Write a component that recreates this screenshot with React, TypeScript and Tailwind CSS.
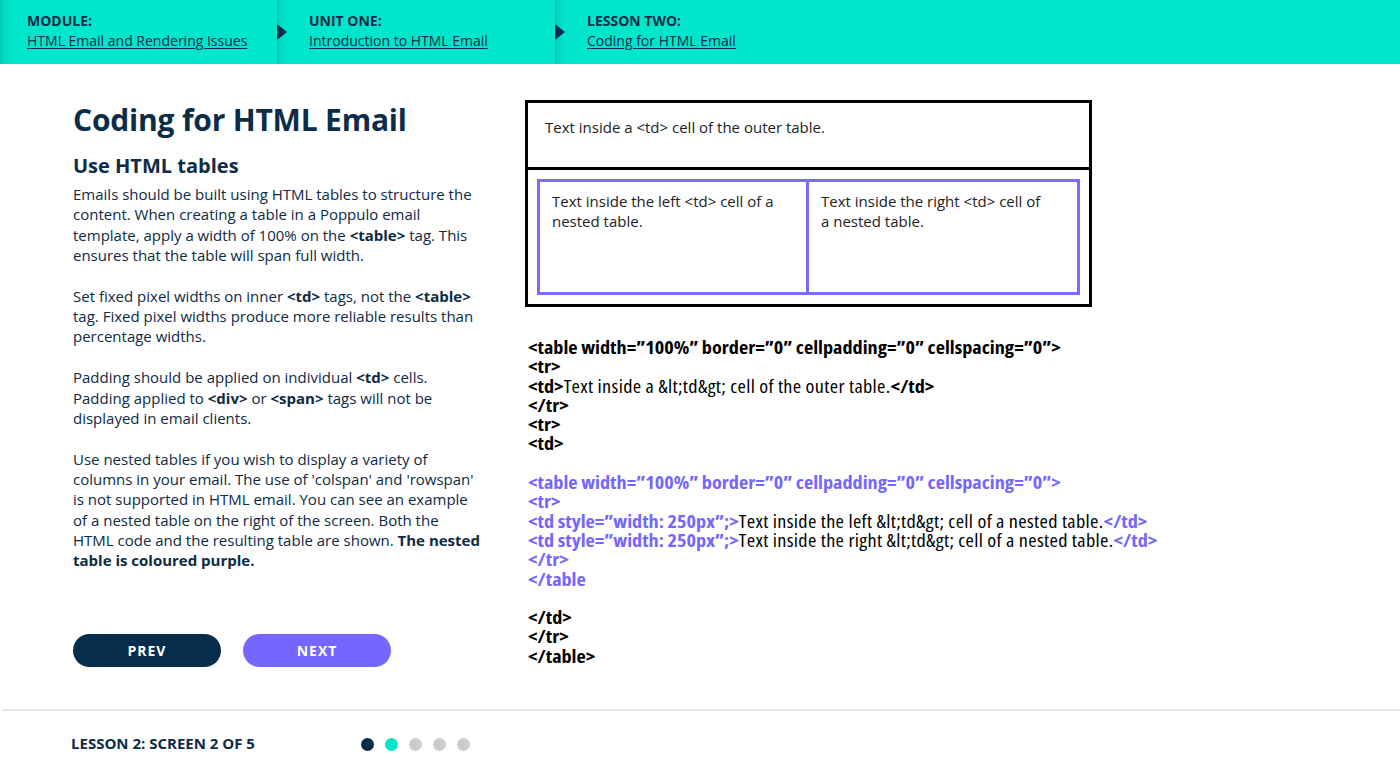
import React from "react";

const crumbs = [
  { label: "MODULE:", link: "HTML Email and Rendering Issues", w: "w-[277px] pl-[27px]" },
  { label: "UNIT ONE:", link: "Introduction to HTML Email", w: "w-[278px] pl-[32px]" },
  { label: "LESSON TWO:", link: "Coding for HTML Email", w: "flex-1 pl-[32px]" },
];

const Tag = ({ children }: { children: React.ReactNode }) => (
  <b className="font-bold">{children}</b>
);

const App = () => {
  return (
    <div className="min-h-screen bg-white font-['Open_Sans',sans-serif] text-[#0c2c47]">
      {/* Breadcrumb header */}
      <header className="flex h-16 bg-[#00e6cc]">
        {crumbs.map((c, i) => (
          <div
            key={c.label}
            className={`${c.w} relative h-full bg-[linear-gradient(to_right,#00c9b2_0px,#00d8c0_3px,#00e2c8_8px,#00e6cc_16px)] pt-[11px]`}
          >
            {i > 0 && (
              <span className="absolute left-0 top-[24px] h-0 w-0 border-y-[8px] border-l-[10px] border-y-transparent border-l-[#0b2d4c]" />
            )}
            <div className="text-[14px] font-bold leading-[20px]">{c.label}</div>
            <a className="block text-[14px] leading-[20px] underline underline-offset-2">{c.link}</a>
          </div>
        ))}
      </header>

      <main className="flex h-[645px]">
        {/* Left column */}
        <section className="ml-[73px] flex w-[452px] flex-col pr-[43px] pt-[37px]">
          <h1 className="text-[30px] font-bold leading-[38px] tracking-[-0.2px]">Coding for HTML Email</h1>
          <h2 className="mt-[14px] text-[20px] font-bold leading-[26px]">Use HTML tables</h2>
          <div className="mt-[5px] text-[15px] leading-[20.3px] text-[#0e2a44]">
            <p className="mb-[20.6px]">
              Emails should be built using HTML tables to structure the content. When creating a table in a Poppulo
              email template, apply a width of 100% on the <Tag>&lt;table&gt;</Tag> tag. This ensures that the table
              will span full width.
            </p>
            <p className="mb-[20.6px]">
              Set fixed pixel widths on inner <Tag>&lt;td&gt;</Tag> tags, not the <Tag>&lt;table&gt;</Tag> tag. Fixed
              pixel widths produce more reliable results than percentage widths.
            </p>
            <p className="mb-[20.6px]">
              Padding should be applied on individual <Tag>&lt;td&gt;</Tag> cells. Padding applied to{" "}
              <Tag>&lt;div&gt;</Tag> or <Tag>&lt;span&gt;</Tag> tags will not be displayed in email clients.
            </p>
            <p>
              Use nested tables if you wish to display a variety of columns in your email. The use of 'colspan' and
              'rowspan' is not supported in HTML email. You can see an example of a nested table on the right of the
              screen. Both the HTML code and the resulting table are shown.{" "}
              <Tag>The nested table is coloured purple.</Tag>
            </p>
          </div>

          <div className="mt-[63px] flex gap-[22px]">
            <button className="h-[33px] w-[148px] rounded-full bg-[#062d4b] text-[14px] font-bold tracking-[1px] text-white">
              PREV
            </button>
            <button className="h-[33px] w-[148px] rounded-full bg-[#7466ff] text-[14px] font-bold tracking-[1px] text-white">
              NEXT
            </button>
          </div>
        </section>

        {/* Right column */}
        <section className="flex flex-col pt-[36px]">
          <div className="w-[567px] border-[3px] border-black text-[15px] leading-[19.5px] text-[#222]">
            <div className="h-[67px] border-b-[3px] border-black pl-[17px] pt-[15px]">
              Text inside a &lt;td&gt; cell of the outer table.
            </div>
            <div className="px-[9px] pb-[9px] pt-[9px]">
              <div className="flex h-[116px] border-[3px] border-[#7b6cff]">
                <div className="w-[269px] border-r-[3px] border-[#7b6cff] pl-[12px] pr-[10px] pt-[10px]">
                  Text inside the left &lt;td&gt; cell of a nested table.
                </div>
                <div className="flex-1 pl-[12px] pr-[30px] pt-[10px]">
                  Text inside the right &lt;td&gt; cell of a nested table.
                </div>
              </div>
            </div>
          </div>

          {/* Code sample, condensed face */}
          <pre className="ml-[3px] mt-[31px] origin-left scale-x-[1.123] font-['Open_Sans',sans-serif] text-[18px] leading-[19.3px] text-black [font-stretch:75%]">
            <div className="font-bold">&lt;table width=”100%” border=”0” cellpadding=”0” cellspacing=”0”&gt;</div>
            <div className="font-bold">&lt;tr&gt;</div>
            <div className="font-normal">
              <b>&lt;td&gt;</b>
              <span className="tracking-[0.3px]">Text inside a &amp;lt;td&amp;gt; cell of the outer table.</span>
              <b>&lt;/td&gt;</b>
            </div>
            <div className="font-bold">&lt;/tr&gt;</div>
            <div className="font-bold">&lt;tr&gt;</div>
            <div className="font-bold">&lt;td&gt;</div>
            <div>&nbsp;</div>
            <div className="font-bold text-[#7466ff]">&lt;table width=”100%” border=”0” cellpadding=”0” cellspacing=”0”&gt;</div>
            <div className="font-bold text-[#7466ff]">&lt;tr&gt;</div>
            <div className="font-normal">
              <b className="text-[#7466ff]">&lt;td style=”width: 250px”;&gt;</b>
              <span className="tracking-[0.3px]">Text inside the left &amp;lt;td&amp;gt; cell of a nested table.</span>
              <b className="text-[#7466ff]">&lt;/td&gt;</b>
            </div>
            <div className="font-normal">
              <b className="text-[#7466ff]">&lt;td style=”width: 250px”;&gt;</b>
              <span className="tracking-[0.3px]">Text inside the right &amp;lt;td&amp;gt; cell of a nested table.</span>
              <b className="text-[#7466ff]">&lt;/td&gt;</b>
            </div>
            <div className="font-bold text-[#7466ff]">&lt;/tr&gt;</div>
            <div className="font-bold text-[#7466ff]">&lt;/table</div>
            <div>&nbsp;</div>
            <div className="font-bold">&lt;/td&gt;</div>
            <div className="font-bold">&lt;/tr&gt;</div>
            <div className="font-bold">&lt;/table&gt;</div>
          </pre>
        </section>
      </main>

      {/* Footer */}
      <footer className="ml-[2px] flex h-[70px] items-center border-t-2 border-[#e6e6e6] pb-[4px] pl-[69px]">
        <span className="w-[290px] text-[15px] font-bold text-[#0c2c47]">LESSON 2: SCREEN 2 OF 5</span>
        <div className="flex gap-[11px] pt-[2px]">
          <span className="h-[13px] w-[13px] rounded-full bg-[#062d4b]" />
          <span className="h-[13px] w-[13px] rounded-full bg-[#00e6cc]" />
          <span className="h-[13px] w-[13px] rounded-full bg-[#cccccc]" />
          <span className="h-[13px] w-[13px] rounded-full bg-[#cccccc]" />
          <span className="h-[13px] w-[13px] rounded-full bg-[#cccccc]" />
        </div>
      </footer>
    </div>
  );
};

export default App;
